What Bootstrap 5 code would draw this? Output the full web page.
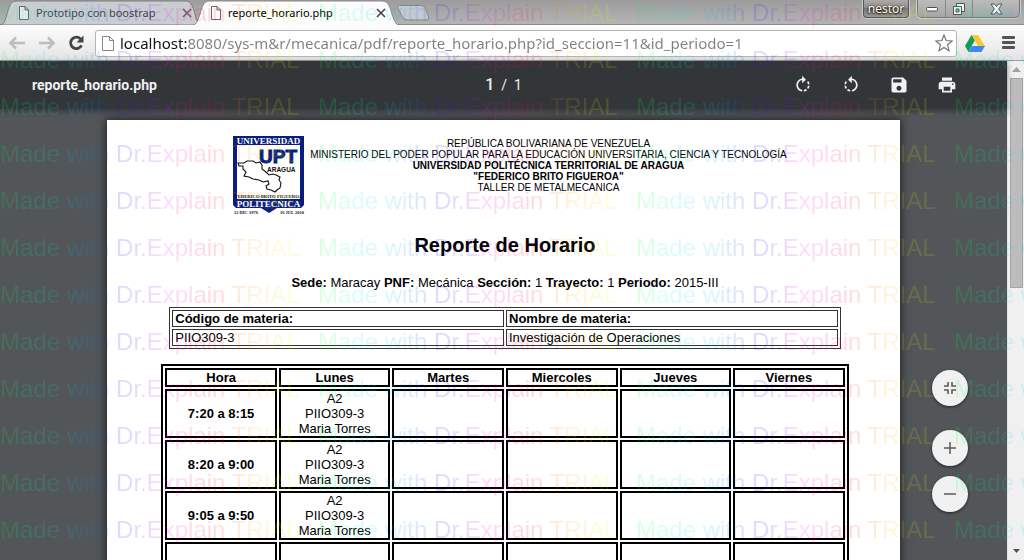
<!DOCTYPE html>
<html lang="es">
<head>
<meta charset="utf-8">
<meta name="viewport" content="width=device-width, initial-scale=1">
<title>reporte_horario.php</title>
<link href="https://cdn.jsdelivr.net/npm/bootstrap@5.3.0/dist/css/bootstrap.min.css" rel="stylesheet">
<style>
  body { font-family: "Noto Sans", "Open Sans", sans-serif; background: #525659; color: #000; }
  .app { height: 100vh; }
  button { border: 0; background: none; padding: 0; }

  /* tab strip */
  .tabstrip { height: 25px; background: linear-gradient(#9c9c9c, #b4b4b4); border-bottom: 1px solid #8b8b8b; }
  .tab { position: relative; height: 25px; font-size: 11px; line-height: 24px; padding: 1px 14px 0 18px; gap: 6px; }
  .tab > .tab-shape { position: absolute; inset: 0; width: 100%; height: 100%; }
  .tab > :not(.tab-shape) { position: relative; }
  .tab-back { width: 202px; padding-right: 10px; color: #444; }
  .tab-front { width: 208px; margin-left: -10px; z-index: 1; }
  .new-tab { width: 36px; height: 16px; margin: 5px 0 0 -4px; }
  .user-btn { width: 46px; height: 18px; font-size: 12px; line-height: 14px; color: #fff; text-shadow: 0 0 2px #000, 0 1px 2px #000; border: 1px solid #555; border-top: 0; border-radius: 0 0 4px 4px; background: linear-gradient(#aaa, #8d8d8d 50%, #777 50%, #999); box-shadow: 0 0 0 1px #ccc; }
  .win-btns { height: 18px; border: 1px solid #777; border-top: 0; border-radius: 0 0 5px 5px; box-shadow: 0 0 0 1px #ccc; background: linear-gradient(#bbb, #a5a5a5); }
  .win-btns button { width: 27px; height: 17px; line-height: 0; }
  .win-btns button + button { border-left: 1px solid #888; }
  .win-btns .win-close { width: 47px; }

  /* address bar */
  .toolbar { height: 36px; background: linear-gradient(#fdfdfd, #e4e4e4); border-bottom: 1px solid #9a9a9a; padding: 4px 8px 3px 8px; }
  .omnibox { height: 27px; border: 1px solid #b5b5b5; border-radius: 3px; background: #fff; padding: 0 3px 0 6px; gap: 6px; margin-left: 9px; }
  /* the host part of the address is darker than its path */
  .url-edit { min-width: 0; height: 25px; border: 0; outline: 0; padding: 0 0 1px; font-size: 15px; color: transparent; caret-color: #111; background: linear-gradient(90deg, #111 67px, #808080 67px); -webkit-background-clip: text; background-clip: text; }

  /* viewer */
  .viewer { min-height: 0; background: #525659; }
  .pdfbar { position: relative; z-index: 2; height: 48px; background: #323639; color: #f1f1f1; font-family: Roboto, sans-serif; font-size: 14px; padding: 0 32px; box-shadow: 0 2px 6px rgba(0,0,0,.4); display: grid; grid-template-columns: 1fr auto 1fr; }
  .pdfbar .doc-name { font-weight: 700; }
  .pdfbar .page-now { font-size: 16px; font-weight: 500; }
  .pdfbar .tools { gap: 28px; margin-right: 18px; }
  .pdf-scroll { min-height: 0; overflow: hidden; padding: 11px 107px 0; position: relative; }
  .sheet { background: #fff; min-height: 1122px; box-shadow: 0 0 8px 1px #222; font-family: "Liberation Sans", sans-serif; font-size: 13px; line-height: 15px; padding: 15px 0 0 3px; }
  .letterhead { font-size: 10px; line-height: 11px; gap: 5px; padding-left: 9px; }
  .letterhead p { padding-top: 3px; }
  .sheet h1 { font-size: 20px; line-height: 24px; font-weight: 700; margin: 18px 0; }
  .sheet .meta { margin-bottom: 17px; }
  .sheet table { border-collapse: separate; border-spacing: 2px; }
  .subject { width: 85%; border: 1px solid #333; margin-bottom: 15px; }
  .subject th, .subject td { border: 1px solid #333; width: 50%; padding: 0 2px; }
  .hours { width: 87%; border: 2px solid #000; table-layout: fixed; text-align: center; }
  .hours th, .hours td { border: 2px solid #000; padding: 0; height: 49px; vertical-align: middle; }
  .hours thead th { height: 19px; }
  .zoom-btns { position: absolute; right: 39px; bottom: 48px; z-index: 3; }
  .zoom-btns button { width: 36px; height: 36px; border-radius: 50%; background: #f1f1f1; box-shadow: 0 1px 3px rgba(0,0,0,.6); line-height: 0; }
  .zoom-btns .zoom-in { margin-bottom: 10px; }
  .vscroll { width: 17px; background: #f0f0f0; border-left: 1px solid #e4e4e4; }
  .vscroll .thumb { width: 13px; height: 42%; background: #bcbcbc; border: 1px solid #a5a5a5; }

  /* trial watermark laid over the whole window */
  .trial { position: absolute; inset: 0; overflow: hidden; pointer-events: none; z-index: 10; opacity: .14; font: 24px/47px "Liberation Sans", sans-serif; padding-top: 36px; margin-top: -47px; white-space: nowrap; }
  .trial span { display: block; flex: none; width: 318px; color: transparent; -webkit-background-clip: text; background-clip: text; background-image: linear-gradient(90deg, #0f3 0, #0fa 30px, #0cf 66px, #08f 92px, #20f 122px, #60f 145px, #f0f 165px, #f08 190px, #f02 215px, #f60 235px, #fb0 255px, #df0 290px, #8f0 318px); }
</style>
</head>
<body>
<div class="app d-flex flex-column position-relative overflow-hidden">
  <header class="flex-shrink-0">
    <div class="tabstrip d-flex">
      <div class="tab tab-back d-flex align-items-center">
        <svg class="tab-shape" viewBox="0 0 202 25" preserveAspectRatio="none"><path d="M0 25C5 24 5 20 7 14S10 1 16 1H186C192 1 193 8 195 14S197 24 202 25Z" fill="#c9cdd2" stroke="#7c7c7c"/></svg>
        <svg width="12" height="14" viewBox="0 0 12 14" fill="#e8e8e8" stroke="#666"><path d="M1.500 .5H7L10.500 4V13.500H1.500ZM7 .5V4H10.500"/></svg>
        <span class="flex-grow-1">Prototipo con boostrap</span>
        <button aria-label="Cerrar"><svg class="d-block" width="10" height="10" viewBox="0 0 10 10" stroke="#666" stroke-width="1.600"><path d="M1 1L9 9M9 1L1 9"/></svg></button>
      </div>
      <div class="tab tab-front d-flex align-items-center">
        <svg class="tab-shape" viewBox="0 0 208 25" preserveAspectRatio="none"><path d="M0 26C5 24 6 20 8 14S11 1 17 1H190C197 1 198 8 200 14S203 24 208 26Z" fill="#fcfcfc" stroke="#888"/></svg>
        <svg width="12" height="14" viewBox="0 0 12 14" fill="#fff" stroke="#666"><path d="M1.500 .5H7L10.500 4V13.500H1.500ZM7 .5V4H10.500"/></svg>
        <span class="flex-grow-1">reporte_horario.php</span>
        <button aria-label="Cerrar"><svg class="d-block" width="10" height="10" viewBox="0 0 10 10" stroke="#444" stroke-width="1.600"><path d="M1 1L9 9M9 1L1 9"/></svg></button>
      </div>
      <button class="new-tab" aria-label="Nueva pestaña"><svg class="d-block" width="36" height="16" viewBox="0 0 36 16"><path d="M3 .5H25Q28 .5 30 5L32.500 12Q33 15 31 15H12Q8 15 6.500 12L2 3Q1 .5 3 .5Z" fill="#c6cad0" stroke="#888"/></svg></button>
      <div class="ms-auto d-flex me-1">
        <button class="user-btn me-2">nestor</button>
        <div class="win-btns d-flex">
          <button aria-label="Minimizar"><svg width="12" height="6" viewBox="0 0 12 6"><rect x=".5" y="1.500" width="11" height="3.500" rx="1" fill="#fff" stroke="#4a505c"/></svg></button>
          <button aria-label="Restaurar"><svg width="12" height="12" viewBox="0 0 12 12" stroke="#4a505c" fill="#f4f4f4"><path d="M3.500 .5H11.500V8.500H3.500Z"/><path d="M.5 3.500H8.500V11.500H.5Z"/><path d="M3 6H6V9H3Z" fill="#aaa"/></svg></button>
          <button class="win-close" aria-label="Cerrar ventana"><svg width="13" height="12" viewBox="0 0 13 12"><path d="M1 1H4.500L6.500 3.500L8.500 1H12L8.700 6L12 11H8.500L6.500 8.500L4.500 11H1L4.300 6Z" fill="#f4f4f4" stroke="#4a505c"/></svg></button>
        </div>
      </div>
    </div>
    <div class="toolbar d-flex align-items-center">
      <button aria-label="Atrás"><svg class="d-block" width="18" height="16" viewBox="0 0 18 16" fill="none" stroke="#bdbdbd" stroke-width="2.500"><path d="M8 2.500L2.500 8L8 13.500M3 8H17"/></svg></button>
      <button class="ms-2 ps-1" aria-label="Adelante"><svg class="d-block" width="18" height="16" viewBox="0 0 18 16" fill="none" stroke="#bdbdbd" stroke-width="2.500"><path d="M10 2.500L15.500 8L10 13.500M15 8H1"/></svg></button>
      <button class="ms-2 ps-1" aria-label="Recargar"><svg class="d-block" width="18" height="16" viewBox="0 0 18 16"><path d="M12.500 4A5.700 5.700 0 1 0 13.500 10.300" fill="none" stroke="#444" stroke-width="2.800"/><path d="M15.500 .5V7.500H8.500Z" fill="#444"/></svg></button>
      <div class="omnibox d-flex align-items-center flex-grow-1">
        <svg width="12" height="15" viewBox="0 0 12 15" fill="#fff" stroke="#888"><path d="M.5 .5H7.500L11.500 4.500V14.500H.5ZM7.500 .5V4.500H11.500"/></svg>
        <input class="url-edit flex-grow-1" type="text" aria-label="Dirección" spellcheck="false" value="localhost:8080/sys-m&amp;r/mecanica/pdf/reporte_horario.php?id_seccion=11&amp;id_periodo=1">
        <button aria-label="Favorito"><svg class="d-block" width="18" height="18" viewBox="0 0 18 18" fill="#fff" stroke="#777" stroke-width="1.200"><path d="M9 1L11.200 6.500L17 7L12.600 10.800L14 16.800L9 13.500L4 16.800L5.400 10.800L1 7L6.800 6.500Z"/></svg></button>
      </div>
      <button class="ms-2" aria-label="Google Drive"><svg class="d-block" width="20" height="17" viewBox="0 0 20 17"><path d="M6.500 0H13L20 11H13Z" fill="#fdc52f"/><path d="M6.500 0L9.700 5.500L3.500 17L0 11Z" fill="#0f9d58"/><path d="M7 11H20L16.500 17H3.500Z" fill="#4285f4"/></svg></button>
      <button class="ms-3" aria-label="Menú"><svg class="d-block" width="15" height="14" viewBox="0 0 15 14" fill="#555"><rect x="1" width="13" height="3" rx="1"/><rect x="1" y="5" width="13" height="3" rx="1"/><rect x="1" y="10" width="13" height="3" rx="1"/></svg></button>
    </div>
  </header>

  <div class="viewer d-flex flex-grow-1">
    <main class="d-flex flex-column flex-grow-1 position-relative">
      <div class="pdfbar flex-shrink-0 align-items-center">
        <span class="doc-name">reporte_horario.php</span>
        <span><span class="page-now">1</span>&nbsp; /&nbsp; 1</span>
        <div class="tools d-flex justify-content-end">
          <button aria-label="Girar a la derecha"><svg class="d-block" width="20" height="20" viewBox="0 0 24 24" fill="#f1f1f1"><path d="M15.550 5.550L11 1v3.070C7.060 4.560 4 7.920 4 12s3.050 7.440 7 7.930v-2.020c-2.840-.48-5-2.940-5-5.910s2.160-5.430 5-5.910V10l4.550-4.450zM19.930 11c-.17-1.390-.72-2.730-1.620-3.890l-1.420 1.420c.54.75.88 1.600 1.020 2.470h2.020zM13 17.900v2.020c1.390-.17 2.740-.71 3.900-1.610l-1.440-1.440c-.75.54-1.590.89-2.460 1.030zm3.890-2.420l1.420 1.410c.9-1.160 1.450-2.500 1.620-3.890h-2.020c-.14.87-.48 1.720-1.020 2.480z"/></svg></button>
          <button aria-label="Girar a la izquierda"><svg class="d-block" width="20" height="20" viewBox="0 0 24 24" fill="#f1f1f1"><path d="M7.110 8.530L5.700 7.110C4.800 8.270 4.240 9.610 4.070 11h2.020c.14-.88.49-1.720 1.020-2.470zM6.090 13H4.070c.17 1.390.72 2.730 1.620 3.890l1.410-1.420c-.52-.75-.87-1.590-1.010-2.470zm1.010 5.320c1.160.9 2.510 1.440 3.900 1.610V17.900c-.87-.15-1.710-.49-2.460-1.030L7.100 18.320zM13 4.070V1L8.450 5.550 13 10V6.090c2.840.48 5 2.940 5 5.910s-2.160 5.430-5 5.910v2.020c3.950-.49 7-3.850 7-7.930s-3.050-7.440-7-7.930z"/></svg></button>
          <button aria-label="Guardar"><svg class="d-block" width="20" height="20" viewBox="0 0 24 24" fill="#f1f1f1"><path d="M17 3H5c-1.110 0-2 .9-2 2v14c0 1.100.89 2 2 2h14c1.100 0 2-.9 2-2V7l-4-4zm-5 16c-1.660 0-3-1.340-3-3s1.340-3 3-3 3 1.340 3 3-1.340 3-3 3zm3-10H5V5h10v4z"/></svg></button>
          <button aria-label="Imprimir"><svg class="d-block" width="20" height="20" viewBox="0 0 24 24" fill="#f1f1f1"><path d="M19 8H5c-1.660 0-3 1.340-3 3v6h4v4h12v-4h4v-6c0-1.660-1.340-3-3-3zm-3 11H8v-5h8v5zm3-7c-.55 0-1-.45-1-1s.45-1 1-1 1 .45 1 1-.45 1-1 1zm-1-9H6v4h12V3z"/></svg></button>
        </div>
      </div>

      <div class="pdf-scroll flex-grow-1">
        <article class="sheet">
          <div class="letterhead d-flex justify-content-center text-center">
            <svg width="73" height="80" viewBox="0 0 73 80" role="img" aria-label="Universidad Politécnica Territorial de Aragua">
              <path d="M1 1H72V70L69 73H45L37 78L29 73H4L1 70Z" fill="#0a1f7c"/>
              <rect x="5" y="10" width="63" height="54" fill="#fff"/>
              <g font-family="Liberation Serif, serif" font-weight="700" text-anchor="middle">
                <text x="36.500" y="8.500" font-size="9" fill="#fff">UNIVERSIDAD</text>
                <text x="36.500" y="63" font-size="4.700" fill="#111">FEDERICO BRITO FIGUEROA</text>
                <text x="36.500" y="72" font-size="9" fill="#fff">POLITECNICA</text>
                <text x="14" y="79" font-size="4.500" fill="#111">12 DIC 1976</text>
                <text x="60" y="79" font-size="4.500" fill="#111">16 JUL 2010</text>
              </g>
              <g font-family="Liberation Sans, sans-serif" font-weight="700">
                <text x="27" y="28" font-size="19" fill="#0a1f7c" stroke="#0a1f7c">UPT</text>
                <text x="35" y="37" font-size="6.500" fill="#111">ARAGUA</text>
              </g>
              <path d="M6 28L12 28L15 26L21 26L24 28L28 27L30 30L30 34L34 37L37 40L41 39L44 40L48 42L47 45L49 48L48 53L45 55L43 57L39 55L35 54L34 51L37 49L36 46L31 47L27 45L21 44L17 42L12 41L14 37L11 34L11 31L7 31Z" fill="#fff" fill-opacity=".7" stroke="#111" stroke-width="1.100"/>
            </svg>
            <p class="mb-0">REPÚBLICA BOLIVARIANA DE VENEZUELA<br>MINISTERIO DEL PODER POPULAR PARA LA EDUCACIÓN UNIVERSITARIA, CIENCIA Y TECNOLOGÍA<br><b>UNIVERSIDAD POLITÉCNICA TERRITORIAL DE ARAGUA<br>"FEDERICO BRITO FIGUEROA"</b><br>TALLER DE METALMECANICA</p>
          </div>
          <h1 class="text-center">Reporte de Horario</h1>
          <p class="meta text-center"><b>Sede:</b> Maracay <b>PNF:</b> Mecánica <b>Sección:</b> 1 <b>Trayecto:</b> 1 <b>Periodo:</b> 2015-III</p>
          <table class="subject mx-auto">
            <thead><tr><th>Código de materia:</th><th>Nombre de materia:</th></tr></thead>
            <tbody><tr><td>PIIO309-3</td><td>Investigación de Operaciones</td></tr></tbody>
          </table>
          <table class="hours mx-auto">
            <thead><tr><th>Hora</th><th>Lunes</th><th>Martes</th><th>Miercoles</th><th>Jueves</th><th>Viernes</th></tr></thead>
            <tbody>
              <tr><th>7:20 a 8:15</th><td>A2<br>PIIO309-3<br>Maria Torres</td><td></td><td></td><td></td><td></td></tr>
              <tr><th>8:20 a 9:00</th><td>A2<br>PIIO309-3<br>Maria Torres</td><td></td><td></td><td></td><td></td></tr>
              <tr><th>9:05 a 9:50</th><td>A2<br>PIIO309-3<br>Maria Torres</td><td></td><td></td><td></td><td></td></tr>
              <tr><th></th><td></td><td></td><td></td><td></td><td></td></tr>
            </tbody>
          </table>
        </article>
      </div>
      <div class="zoom-btns d-flex flex-column">
        <button class="mb-4" aria-label="Ajustar a la página"><svg width="14" height="14" viewBox="0 0 14 14" fill="none" stroke="#5a5a5a" stroke-width="1.600"><path d="M1 5H5V1M9 1V5H13M13 9H9V13M5 13V9H1"/></svg></button>
        <button class="zoom-in" aria-label="Acercar"><svg width="14" height="14" viewBox="0 0 14 14" stroke="#5a5a5a" stroke-width="1.500"><path d="M1 7H13M7 1V13"/></svg></button>
        <button aria-label="Alejar"><svg width="14" height="14" viewBox="0 0 14 14" stroke="#5a5a5a" stroke-width="1.500"><path d="M1 7H13"/></svg></button>
      </div>
    </main>
    <div class="vscroll flex-shrink-0 d-flex flex-column align-items-center" aria-hidden="true">
      <svg class="my-1 flex-shrink-0" width="9" height="9" viewBox="0 0 9 9"><path d="M0 7L4.500 2L9 7Z" fill="#a0a0a0"/></svg>
      <div class="thumb"></div>
      <svg class="mt-auto mb-1 flex-shrink-0" width="9" height="9" viewBox="0 0 9 9"><path d="M1 2L4.500 6L8 2Z" fill="#505050"/></svg>
    </div>
  </div>

  <div class="trial" aria-hidden="true"></div>
</div>
<script src="https://cdn.jsdelivr.net/npm/bootstrap@5.3.0/dist/js/bootstrap.bundle.min.js"></script>
<script>
  // Tile the trial notice over the full window.
  const layer = document.querySelector('.trial');
  const cols = Math.ceil(innerWidth / 318), rows = Math.ceil(innerHeight / 47) + 1;
  layer.innerHTML = ('<div class="d-flex">' + '<span>Made with Dr.Explain TRIAL</span>'.repeat(cols) + '</div>').repeat(rows);
</script>
</body>
</html>
